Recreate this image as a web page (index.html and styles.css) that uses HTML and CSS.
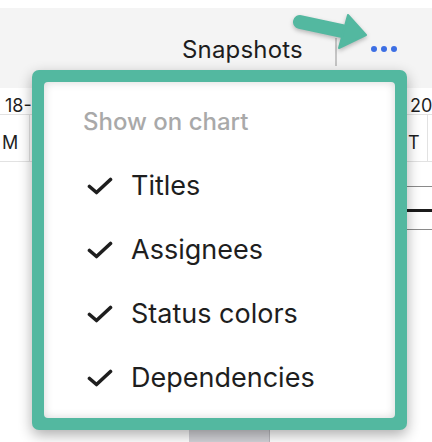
FILE: index.html
```html
<!DOCTYPE html>
<html>
<head>
<meta charset="utf-8">
<link rel="stylesheet" href="styles.css">
</head>
<body>
<div class="page">
  <div class="topgap"></div>
  <header class="toolbar">
    <span class="title">Snapshots</span>
    <span class="divider"></span>
    <span class="more"><i></i><i></i><i></i></span>
  </header>
  <div class="chart">
    <div class="row weeks">
      <div class="wk wk1">18-24 Mar</div>
      <div class="wk wk2">20-26 Mar</div>
    </div>
    <div class="row days">
      <div class="day d1">M</div>
      <div class="day dmid"></div>
      <div class="day d2">T</div>
      <div class="day d3"></div>
    </div>
    <div class="lines">
      <div class="ln gray first"></div>
      <div class="ln dark"></div>
      <div class="ln gray"></div>
    </div>
    <div class="bar"></div>
  </div>

  <div class="popover">
    <div class="menu">
      <div class="menu-head">Show on chart</div>
      <div class="item"><svg class="check" viewBox="0 0 26 18"><polyline points="2.5,9.5 9.5,15.5 23.5,2.5"/></svg><span>Titles</span></div>
      <div class="item"><svg class="check" viewBox="0 0 26 18"><polyline points="2.5,9.5 9.5,15.5 23.5,2.5"/></svg><span>Assignees</span></div>
      <div class="item"><svg class="check" viewBox="0 0 26 18"><polyline points="2.5,9.5 9.5,15.5 23.5,2.5"/></svg><span>Status colors</span></div>
      <div class="item"><svg class="check" viewBox="0 0 26 18"><polyline points="2.5,9.5 9.5,15.5 23.5,2.5"/></svg><span>Dependencies</span></div>
    </div>
  </div>

  <svg class="arrow" viewBox="285 5 90 50" width="90" height="50">
    <line x1="300" y1="22" x2="342" y2="31" />
    <polygon points="348,15 366,35 339,48" />
  </svg>
</div>
</body>
</html>
```

FILE: styles.css
```css
* { box-sizing: border-box; }
html, body { margin: 0; padding: 0; background: #fff; }
body {
  font-family: Inter, "Noto Sans", "Liberation Sans", sans-serif;
  color: #1f1f1f;
  width: 432px;
  height: 442px;
  overflow: hidden;
}
.page { position: relative; width: 432px; height: 442px; overflow: hidden; }

.topgap { height: 8px; background: #fff; }

.toolbar {
  height: 80px;
  background: #f4f4f4;
  display: flex;
  justify-content: flex-end;
  align-items: flex-start;
  padding-right: 35px;
}
.title {
  font-size: 24px;
  line-height: 29px;
  margin-top: 27px;
  color: #1d1d1d;
  letter-spacing: 0.2px;
}
.divider {
  width: 2px;
  height: 28px;
  background: #c4c4c4;
  margin-top: 30px;
  margin-left: 32px;
}
.more {
  display: flex;
  gap: 4px;
  margin-top: 38px;
  margin-left: 34px;
}
.more i {
  display: block;
  width: 6px;
  height: 6px;
  border-radius: 50%;
  background: #3d6fe4;
}

.chart { display: flex; flex-direction: column; }
.row { display: flex; border-bottom: 1px solid #e2e2e2; }
.weeks { height: 27px; }
.wk {
  font-size: 18px;
  line-height: 18px;
  padding-top: 9px;
  white-space: nowrap;
  overflow: hidden;
}
.wk1 { width: 405px; padding-left: 5px; }
.wk2 { flex: 1; padding-left: 5px; }
.days { height: 47px; }
.day {
  font-size: 18px;
  line-height: 18px;
  padding-top: 19px;
  border-right: 1px solid #e2e2e2;
}
.d1 { width: 30px; padding-left: 2px; }
.dmid { width: 376px; }
.d2 { width: 22px; padding-left: 2px; }
.d3 { flex: 1; border-right: 0; }

.lines { display: flex; flex-direction: column; padding-left: 395px; }
.ln { height: 1px; background: #8a8a8a; }
.ln.first { margin-top: 24px; }
.ln.dark { height: 3px; background: #1b1b1b; margin-top: 22px; }
.ln.gray:last-child { margin-top: 17px; }

.bar {
  margin-top: 200px;
  margin-left: 189px;
  width: 81px;
  height: 14px;
  background: #d3d3d8;
  border-right: 1px solid #b9b9be;
}

.popover {
  position: absolute;
  left: 32px;
  top: 70px;
  width: 375px;
  height: 360px;
  padding: 12px;
  background: #53b8a0;
  border-radius: 7px;
  box-shadow: 0 5px 14px rgba(0, 0, 0, 0.32);
}
.menu {
  width: 100%;
  height: 100%;
  background: #fff;
  border-radius: 4px;
  box-shadow: inset 0 0 10px rgba(0, 0, 0, 0.16);
  padding-top: 8px;
}
.menu-head {
  height: 64px;
  line-height: 64px;
  font-size: 24px;
  font-weight: 500;
  color: #a9a9a9;
  padding-left: 39px;
}
.item {
  height: 64px;
  display: flex;
  align-items: center;
  padding-left: 43px;
  font-size: 27px;
  line-height: 64px;
  color: #1e1e1e;
}
.check {
  width: 26px;
  height: 18px;
  margin-right: 18px;
  flex: none;
}
.check polyline {
  fill: none;
  stroke: #1e1e1e;
  stroke-width: 3.6;
  stroke-linecap: round;
  stroke-linejoin: round;
}

.arrow {
  position: absolute;
  left: 285px;
  top: 5px;
  overflow: visible;
  filter: drop-shadow(0 2px 2px rgba(0, 0, 0, 0.25));
}
.arrow line {
  stroke: #53b8a0;
  stroke-width: 14;
  stroke-linecap: round;
}
.arrow polygon {
  fill: #53b8a0;
  stroke: #53b8a0;
  stroke-width: 2;
  stroke-linejoin: round;
}
```
